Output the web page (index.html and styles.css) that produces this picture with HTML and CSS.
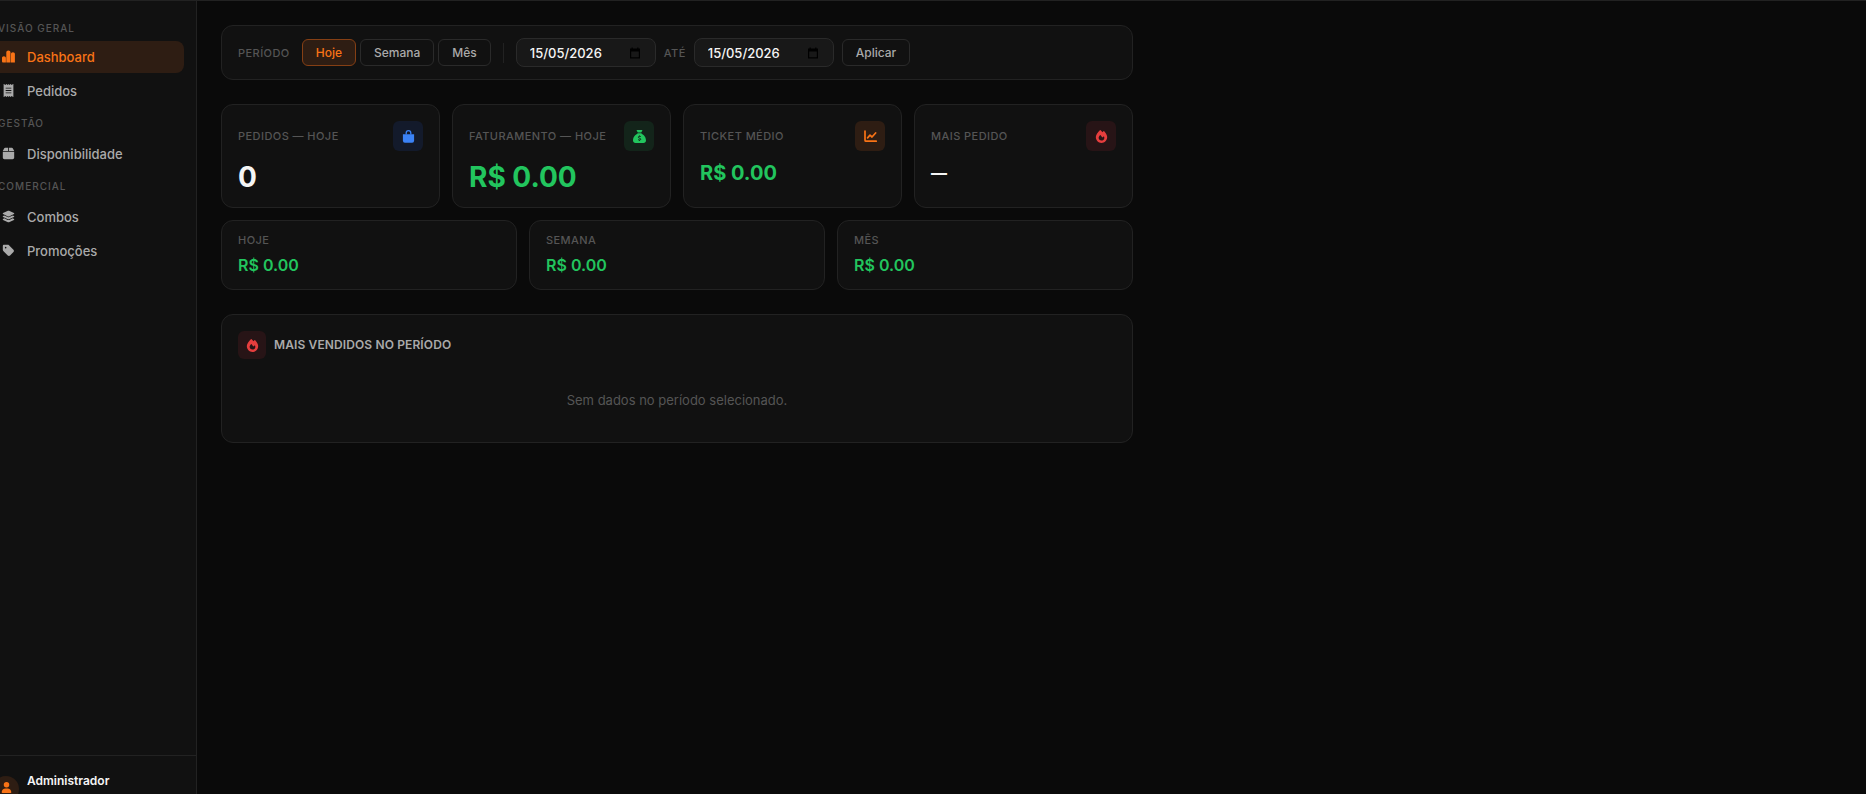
FILE: index.html
```html
<!DOCTYPE html>
<html lang="pt-BR">
<head>
<meta charset="utf-8">
<title>Dashboard</title>
<link rel="stylesheet" href="styles.css">
</head>
<body>
<svg class="sprite" aria-hidden="true">
  <symbol id="i-bars" viewBox="0 0 13 13"><path d="M0 8.200C0 7 .7 6.300 1.900 6.300S3.900 7 3.900 8.200V12.500H1.300C.5 12.500 0 12 0 11.200ZM4.300 2.500C4.300 1.200 5.200.5 6.400.5S8.500 1.200 8.500 2.500V12.500H4.300ZM9 4.200C9 3 9.700 2.300 10.900 2.300S12.900 3 12.900 4.200V12.500H9Z"/></symbol>
  <symbol id="i-receipt" viewBox="0 0 384 512"><path fill-rule="evenodd" d="M14 2C5 -2 0 5 0 12V500C0 508 6 514 14 510L64 476 112 508 160 476 192 508 224 476 272 508 320 476 370 510C378 514 384 508 384 500V12C384 4 378 -2 370 2L320 36 272 4 224 36 192 4 160 36 112 4 64 36ZM80 144H304V176H80ZM80 240H304V272H80ZM80 336H304V368H80Z"/></symbol>
  <symbol id="i-box" viewBox="0 0 448 512"><path d="M50.700 58.500 0 160H208V32H93.700C75.500 32 58.900 42.300 50.700 58.500ZM240 160H448L397.300 58.500C389.100 42.300 372.500 32 354.300 32H240ZM448 184H0V416C0 451.300 28.700 480 64 480H384C419.300 480 448 451.300 448 416Z"/></symbol>
  <symbol id="i-layers" viewBox="0 0 576 512"><path d="M264.500 5.200c14.900-6.900 32.100-6.900 47 0l218.600 101c8.500 3.900 13.900 12.400 13.900 21.800s-5.400 17.900-13.900 21.800l-218.600 101c-14.900 6.900-32.100 6.900-47 0L45.900 149.800C37.400 145.800 32 137.300 32 128s5.400-17.900 13.900-21.800ZM476.900 209.600l53.200 24.600c8.500 3.900 13.900 12.400 13.900 21.800s-5.400 17.900-13.900 21.800l-218.600 101c-14.900 6.900-32.100 6.900-47 0L45.900 277.800C37.400 273.800 32 265.300 32 256s5.400-17.900 13.900-21.800l53.200-24.600 152 70.200c23.400 10.800 50.400 10.800 73.800 0ZM476.900 337.600l53.200 24.600c8.500 3.900 13.900 12.400 13.900 21.800s-5.400 17.900-13.900 21.800l-218.600 101c-14.900 6.900-32.100 6.900-47 0L45.900 405.800C37.400 401.800 32 393.300 32 384s5.400-17.900 13.900-21.800l53.200-24.600 152 70.200c23.400 10.800 50.400 10.800 73.800 0Z"/></symbol>
  <symbol id="i-tag" viewBox="0 0 448 512"><path fill-rule="evenodd" d="M0 80V229.500c0 17 6.700 33.300 18.700 45.300l176 176c25 25 65.500 25 90.500 0L418.700 317.300c25-25 25-65.500 0-90.500l-176-176C230.700 38.700 214.500 32 197.500 32H48C21.500 32 0 53.500 0 80ZM112 112a32 32 0 1 1 0 64 32 32 0 1 1 0-64Z"/></symbol>
  <symbol id="i-user" viewBox="0 0 448 512"><path d="M224 256A128 128 0 1 0 224 0a128 128 0 1 0 0 256ZM178.300 304C79.800 304 0 383.800 0 482.300 0 498.700 13.300 512 29.700 512H418.300c16.400 0 29.700-13.300 29.700-29.700C448 383.800 368.200 304 269.700 304Z"/></symbol>
  <symbol id="i-bag" viewBox="0 0 12 13"><path d="M3.700 4.500V3a2.300 2.300 0 0 1 4.600 0V4.500" fill="none" stroke="currentColor" stroke-width="1.300"/><path d="M.4 4.300H11.600V10.700A2 2 0 0 1 9.600 12.700H2.400A2 2 0 0 1 .4 10.700Z"/></symbol>
  <symbol id="i-sack" viewBox="0 0 512 512"><path d="M320 96H192L144.600 24.900C137.500 14.200 145.100 0 157.900 0H354.100c12.800 0 20.400 14.200 13.300 24.900ZM192 128H320c3.800 2.500 8.100 5.300 13 8.400C389.700 172.700 512 250.900 512 416c0 53-43 96-96 96H96c-53 0-96-43-96-96C0 250.900 122.300 172.700 179 136.400Z"/><path class="sack-mark" d="M310 262C285 244 210 238 210 284S306 318 306 362 232 402 200 376M256 222V256M256 392V424"/></symbol>
  <symbol id="i-chart" viewBox="0 0 13 13"><path d="M1 1V10.200A1 1 0 0 0 2 11.200H12.300M3.600 7.800 6 5.200 8 7 11.600 3" fill="none" stroke="currentColor" stroke-width="1.700" stroke-linecap="round" stroke-linejoin="round"/></symbol>
  <symbol id="i-fire" viewBox="0 0 448 512"><path fill-rule="evenodd" d="M159.300 5.400c7.800-7.300 19.900-7.200 27.700.1 27.600 25.900 53.500 53.800 77.700 84 11-14.400 23.500-30.100 37-42.900 7.900-7.400 20.100-7.400 28 .1 34.600 33 63.900 76.600 84.500 118 20.300 40.800 33.800 82.500 33.800 111.900C448 404.200 348.200 512 224 512 98.400 512 0 404.100 0 276.500c0-38.400 17.800-85.300 45.400-131.700C73.300 97.700 112.700 48.600 159.300 5.400ZM225.700 416c25.300 0 47.700-7 68.800-21 42.100-29.400 53.400-88.200 28.100-134.400-4.500-9-16-9.600-22.500-2l-25.200 29.300c-6.600 7.600-18.500 7.400-24.700-.5-16.500-21-46-58.500-62.800-79.800-6.300-8-18.300-8.100-24.700-.1-33.800 42.500-50.800 69.300-50.800 99.400C112 375.400 162.600 416 225.700 416Z"/></symbol>
  <symbol id="i-calendar" viewBox="0 0 12 12"><path fill-rule="evenodd" d="M1 1.500H2.500V.5H3.800V1.500H8.200V.5H9.500V1.500H11V11.500H1ZM2.200 4.500V10.300H9.800V4.500Z"/></symbol>
</svg>

<div class="shell">
  <aside class="sidebar">
    <nav class="nav">
      <h2 class="nav-label">Visão geral</h2>
      <a class="nav-item active" href="#"><svg class="icon"><use href="#i-bars"/></svg>Dashboard</a>
      <a class="nav-item" href="#"><svg class="icon"><use href="#i-receipt"/></svg>Pedidos</a>
      <h2 class="nav-label">Gestão</h2>
      <a class="nav-item" href="#"><svg class="icon"><use href="#i-box"/></svg>Disponibilidade</a>
      <h2 class="nav-label">Comercial</h2>
      <a class="nav-item" href="#"><svg class="icon"><use href="#i-layers"/></svg>Combos</a>
      <a class="nav-item" href="#"><svg class="icon"><use href="#i-tag"/></svg>Promoções</a>
    </nav>
    <div class="account">
      <span class="avatar"><svg class="icon"><use href="#i-user"/></svg></span>
      <span class="account-name">Administrador</span>
    </div>
  </aside>

  <main class="main">
    <form class="card filter">
      <span class="caption">Período</span>
      <div class="presets">
        <button type="button" class="btn selected">Hoje</button>
        <button type="button" class="btn">Semana</button>
        <button type="button" class="btn">Mês</button>
      </div>
      <span class="divider"></span>
      <div class="range">
        <span class="date"><input type="text" id="from" value="15/05/2026" aria-label="De"><svg class="icon"><use href="#i-calendar"/></svg></span>
        <label class="caption" for="to">até</label>
        <span class="date"><input type="text" id="to" value="15/05/2026"><svg class="icon"><use href="#i-calendar"/></svg></span>
        <button type="button" class="btn">Aplicar</button>
      </div>
    </form>

    <div class="metrics">
      <section class="card stat">
        <div class="stat-head"><h3 class="caption">Pedidos — hoje</h3><span class="badge blue"><svg class="icon"><use href="#i-bag"/></svg></span></div>
        <div class="value large">0</div>
      </section>
      <section class="card stat">
        <div class="stat-head"><h3 class="caption">Faturamento — hoje</h3><span class="badge green"><svg class="icon"><use href="#i-sack"/></svg></span></div>
        <div class="value large money">R$ 0.00</div>
      </section>
      <section class="card stat">
        <div class="stat-head"><h3 class="caption">Ticket médio</h3><span class="badge orange"><svg class="icon"><use href="#i-chart"/></svg></span></div>
        <div class="value money">R$ 0.00</div>
      </section>
      <section class="card stat">
        <div class="stat-head"><h3 class="caption">Mais pedido</h3><span class="badge red"><svg class="icon"><use href="#i-fire"/></svg></span></div>
        <div class="value name">—</div>
      </section>
    </div>

    <div class="totals">
      <section class="card total"><h3 class="caption">Hoje</h3><div class="total-value">R$ 0.00</div></section>
      <section class="card total"><h3 class="caption">Semana</h3><div class="total-value">R$ 0.00</div></section>
      <section class="card total"><h3 class="caption">Mês</h3><div class="total-value">R$ 0.00</div></section>
    </div>

    <section class="card ranking">
      <div class="ranking-head"><span class="badge small red"><svg class="icon"><use href="#i-fire"/></svg></span><h2 class="ranking-title">Mais vendidos no período</h2></div>
      <p class="empty">Sem dados no período selecionado.</p>
    </section>
  </main>
</div>
</body>
</html>
```

FILE: styles.css
```css
* { box-sizing: border-box; }
body {
  margin: 0;
  height: 100vh;
  overflow: hidden;
  background: #0a0a0a;
  color: #f5f5f5;
  font-family: Inter, "Liberation Sans", sans-serif;
  font-size: 13px;
}
h2, h3, p { margin: 0; }
a { color: inherit; text-decoration: none; }
button, input { font: inherit; color: inherit; }
.sprite { position: absolute; width: 0; height: 0; }
.icon { width: 13px; height: 13px; fill: currentColor; flex: none; }

.shell {
  display: flex;
  height: calc(100vh + 28px);
  border-top: 1px solid #222;
}

.sidebar {
  display: flex;
  flex-direction: column;
  flex: none;
  width: 197px;
  background: #111;
  border-right: 1px solid #222;
  overflow: hidden;
}
.nav {
  display: flex;
  flex-direction: column;
  gap: 2px;
  flex: 1;
  margin-left: -11px;
  padding: 16px 12px 0 0;
}
.nav-label {
  padding: 4px 0 4px 9px;
  font-size: 10px;
  font-weight: 500;
  line-height: 14px;
  letter-spacing: 1px;
  text-transform: uppercase;
  color: #555;
}
.nav-item + .nav-label { padding-top: 7px; padding-bottom: 6px; }
.nav-item {
  display: flex;
  align-items: center;
  gap: 12px;
  height: 32px;
  padding-left: 13px;
  border-radius: 8px;
  font-weight: 500;
  color: #aaa;
}
.nav-item .icon { margin-bottom: 2px; }
.nav-item.active { background: #2e1d13; color: #f97316; }

.account {
  display: flex;
  align-items: center;
  gap: 8px;
  height: 67px;
  margin-left: -7px;
  border-top: 1px solid #222;
}
.avatar {
  display: grid;
  place-items: center;
  width: 26px;
  height: 26px;
  padding-bottom: 3px;
  border-radius: 50%;
  background: #2e1d13;
  color: #f97316;
}
.avatar .icon { width: 11px; height: 11px; }
.account-name { height: 34px; font-size: 12px; font-weight: 600; line-height: 18px; }

.main {
  display: flex;
  flex-direction: column;
  gap: 24px;
  flex: 1;
  max-width: 960px;
  padding: 24px;
}
.card { background: #111; border: 1px solid #222; border-radius: 12px; }
.caption {
  font-size: 11px;
  font-weight: 500;
  letter-spacing: 0.04em;
  text-transform: uppercase;
  color: #555;
}

.filter { display: flex; align-items: center; gap: 12px; padding: 12px 16px; }
.presets { display: flex; gap: 4px; }
.btn {
  height: 27px;
  padding: 0 13px;
  border: 1px solid #2a2a2a;
  border-radius: 6px;
  background: #111;
  font-size: 12px;
  font-weight: 500;
  line-height: 16px;
  color: #aaa;
}
.btn.selected { background: #2e1d13; border-color: #853f14; color: #f97316; }
.divider { width: 1px; height: 20px; background: #222; }
.range { display: flex; align-items: center; gap: 8px; }
.date {
  display: flex;
  align-items: center;
  width: 140px;
  height: 29px;
  padding: 0 14px 0 13px;
  border: 1px solid #2a2a2a;
  border-radius: 8px;
  background: #181818;
}
.date input {
  flex: 1;
  min-width: 0;
  padding: 0;
  border: 0;
  outline: 0;
  background: none;
  font-weight: 500;
}
.date .icon { width: 12px; height: 12px; color: #000; }

.metrics { display: grid; grid-template-columns: repeat(4, 1fr); gap: 12px; }
.stat { padding: 16px; }
.stat-head { display: flex; align-items: center; justify-content: space-between; margin-bottom: 12px; }
.badge { display: grid; place-items: center; width: 30px; height: 30px; border-radius: 6px; }
.badge.small { width: 28px; height: 28px; }
.blue { background: #131a2b; color: #3b82f6; }
.green { background: #13241a; color: #22c55e; }
.orange { background: #2e1d13; color: #f97316; }
.red { background: #271416; color: #e53e3e; }
.sack-mark { fill: none; stroke: #13241a; stroke-width: 38; }
.value { font-size: 20px; font-weight: 700; line-height: 20px; }
.value.large { font-size: 28px; line-height: 28px; }
.value.name { font-size: 16px; font-weight: 800; }
.money { color: #22c55e; }

.totals { display: grid; grid-template-columns: repeat(3, 1fr); gap: 12px; margin-top: -12px; }
.total { padding: 12px 16px; }
.total .caption { margin-bottom: 6px; line-height: 15px; }
.total-value { font-size: 16px; font-weight: 600; line-height: 23px; color: #22c55e; }

.ranking { padding: 16px; }
.ranking-head { display: flex; align-items: center; gap: 8px; margin-bottom: 16px; }
.ranking-title {
  font-size: 12px;
  font-weight: 600;
  line-height: 16px;
  letter-spacing: 0.01em;
  text-transform: uppercase;
  color: #aaa;
}
.empty { padding: 16px 0; line-height: 19px; text-align: center; color: #555; }
```
